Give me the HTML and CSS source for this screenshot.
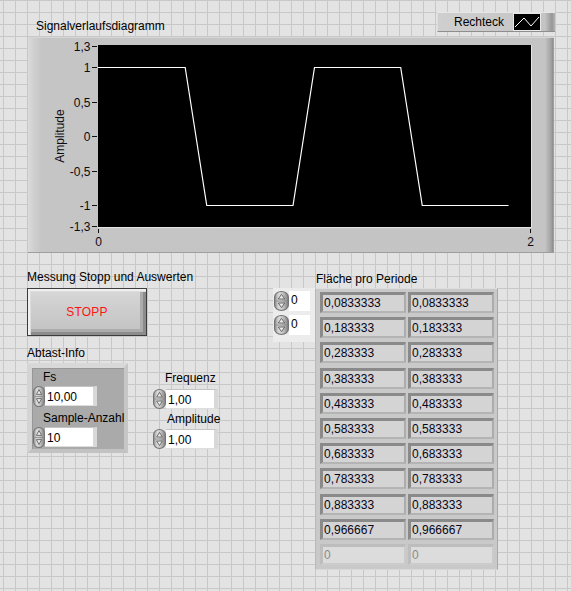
FILE: index.html
```html
<!DOCTYPE html>
<html lang="de">
<head>
<meta charset="utf-8">
<title>Signalverlauf</title>
<link rel="stylesheet" href="styles.css">
</head>
<body>
<svg class="defs" width="0" height="0" aria-hidden="true">
  <defs>
    <linearGradient id="spinG" x1="0" y1="0" x2="1" y2="0">
      <stop offset="0" stop-color="#8e8e8e"/>
      <stop offset="0.3" stop-color="#dcdcdc"/>
      <stop offset="0.6" stop-color="#c4c4c4"/>
      <stop offset="1" stop-color="#7e7e7e"/>
    </linearGradient>
    <symbol id="spin" viewBox="0 0 12 20">
      <rect x="0.5" y="0.5" width="11" height="19" rx="5.5" fill="url(#spinG)" stroke="#747474"/>
      <line x1="1.5" y1="10" x2="10.5" y2="10" stroke="#8a8a8a" stroke-width="0.8"/>
      <polygon points="6,3.4 3.4,8 8.6,8" fill="#e8e8e8" stroke="#5c5c5c" stroke-width="0.8"/>
      <polygon points="3.4,12 8.6,12 6,16.6" fill="#e8e8e8" stroke="#5c5c5c" stroke-width="0.8"/>
    </symbol>
  </defs>
</svg>

<div class="page">
  <div class="graph-head">
    <span class="label graph-label">Signalverlaufsdiagramm</span>
    <div class="legend">
      <span class="legend-text">Rechteck</span>
      <span class="legend-icon">
        <svg width="26" height="16" viewBox="0 0 26 16"><polyline points="1,13 10,4 17,12 25,3" fill="none" stroke="#fff" stroke-width="1"/></svg>
      </span>
    </div>
  </div>

  <div class="graph">
    <svg class="plot" width="526" height="216" viewBox="28 37 526 216">
      <rect x="98" y="45" width="433" height="182" fill="#000"/>
      <path d="M98 227.5H531.5V45" stroke="#e4e4e4" fill="none"/>
      <polyline points="98,67.5 185.2,67.5 206.75,205.5 293,205.5 314.5,67.5 400.7,67.5 422.25,205.5 508.5,205.5" fill="none" stroke="#fff" stroke-width="1.2"/>
      <path d="M92 46.5h5M92 67.5h5M92 102.5h5M92 136.5h5M92 171.5h5M92 205.5h5M92 226.5h5M98.5 229v4M530.5 229v4" stroke="#111" stroke-width="1"/>
      <g class="axis-text" text-anchor="end">
        <text x="90.5" y="50.8">1,3</text>
        <text x="90.5" y="71.8">1</text>
        <text x="90.5" y="106.8">0,5</text>
        <text x="90.5" y="140.8">0</text>
        <text x="90.5" y="175.8">-0,5</text>
        <text x="90.5" y="209.8">-1</text>
        <text x="90.5" y="230.8">-1,3</text>
      </g>
      <g class="axis-text" text-anchor="middle">
        <text x="98.7" y="246">0</text>
        <text x="530.5" y="246">2</text>
        <text x="63.5" y="136" transform="rotate(-90 63.5 136)">Amplitude</text>
      </g>
    </svg>
  </div>

  <div class="lower">
    <div class="left-col">
      <div class="label">Messung Stopp und Auswerten</div>
      <div class="stop-btn">STOPP</div>
      <div class="label abtast">Abtast-Info</div>
      <div class="cluster-row">
        <div class="cluster">
          <div class="label in-label">Fs</div>
          <div class="numeric">
            <svg class="spin" width="12" height="21" viewBox="0 0 12 20" preserveAspectRatio="none"><use href="#spin"/></svg>
            <span class="field">10,00</span>
          </div>
          <div class="label in-label second">Sample-Anzahl</div>
          <div class="numeric">
            <svg class="spin" width="12" height="21" viewBox="0 0 12 20" preserveAspectRatio="none"><use href="#spin"/></svg>
            <span class="field">10</span>
          </div>
        </div>
        <div class="num-col">
          <div class="label freq-label">Frequenz</div>
          <div class="numeric">
            <svg class="spin" width="13" height="20" viewBox="0 0 12 20" preserveAspectRatio="none"><use href="#spin"/></svg>
            <span class="field">1,00</span>
          </div>
          <div class="label amp-label">Amplitude</div>
          <div class="numeric amp-num">
            <svg class="spin" width="13" height="20" viewBox="0 0 12 20" preserveAspectRatio="none"><use href="#spin"/></svg>
            <span class="field">1,00</span>
          </div>
        </div>
      </div>
    </div>

    <div class="array-group">
      <div class="label array-label">Fläche pro Periode</div>
      <div class="array-row">
        <div class="index-panel">
          <div class="index">
            <svg class="spin" width="15" height="20" viewBox="0 0 12 20" preserveAspectRatio="none"><use href="#spin"/></svg>
            <span class="index-field">0</span>
          </div>
          <div class="index">
            <svg class="spin" width="15" height="20" viewBox="0 0 12 20" preserveAspectRatio="none"><use href="#spin"/></svg>
            <span class="index-field">0</span>
          </div>
        </div>
        <div class="array">
          <div class="cell">0,0833333</div><div class="cell">0,0833333</div>
          <div class="cell">0,183333</div><div class="cell">0,183333</div>
          <div class="cell">0,283333</div><div class="cell">0,283333</div>
          <div class="cell">0,383333</div><div class="cell">0,383333</div>
          <div class="cell">0,483333</div><div class="cell">0,483333</div>
          <div class="cell">0,583333</div><div class="cell">0,583333</div>
          <div class="cell">0,683333</div><div class="cell">0,683333</div>
          <div class="cell">0,783333</div><div class="cell">0,783333</div>
          <div class="cell">0,883333</div><div class="cell">0,883333</div>
          <div class="cell">0,966667</div><div class="cell">0,966667</div>
          <div class="cell disabled">0</div><div class="cell disabled">0</div>
        </div>
      </div>
    </div>
  </div>
</div>
</body>
</html>
```

FILE: styles.css
```css
html {
  background-color: #e3e3e3;
  background-image:
    linear-gradient(90deg, #c8c8c8 1px, transparent 1px),
    linear-gradient(#c8c8c8 1px, transparent 1px);
  background-size: 12px 12px;
  background-position: 3px 0;
  min-height: 100%;
}

body {
  margin: 0;
  font-family: "Liberation Sans", Arial, sans-serif;
  font-size: 12px;
  color: #000;
}

.defs {
  position: absolute;
  width: 0;
  height: 0;
  overflow: hidden;
}

.page {
  width: 571px;
  height: 591px;
  padding-top: 12px;
  box-sizing: border-box;
  overflow: hidden;
}

.label {
  line-height: 14px;
  height: 14px;
  white-space: nowrap;
}

/* ---------- graph ---------- */
.graph-head {
  display: flex;
  height: 25px;
}

.graph-label {
  margin-top: 7px;
  margin-left: 36px;
}

.legend {
  margin-left: auto;
  margin-right: 16px;
  width: 118px;
  height: 20px;
  box-sizing: border-box;
  display: flex;
  align-items: center;
  padding-left: 16px;
  border-top: 1px solid #e6e6e6;
  border-left: 1px solid #dedede;
  border-bottom: 1px solid #8e8e8e;
  background: linear-gradient(90deg, #cfcfcf 0, #c8c8c8 60%, #c4c4c4 calc(100% - 10px), #969696 calc(100% - 3px), #b4b4b4 100%);
}

.legend-icon {
  margin-left: 9px;
  width: 28px;
  height: 18px;
  box-sizing: border-box;
  border: 1px solid #e8e8e8;
  background: #000;
  display: flex;
}

.legend-icon svg {
  display: block;
}

.graph {
  margin-left: 28px;
  width: 526px;
  height: 216px;
  background: linear-gradient(90deg, #dadada 0, #cfcfcf 6px, #c5c5c5 14px, #c4c4c4 calc(100% - 9px), #a2a2a2 calc(100% - 3px), #8c8c8c calc(100% - 1px), #b0b0b0 100%);
  box-shadow: inset 0 1px 0 #d6d6d6, inset 0 -1px 0 #9e9e9e;
}

.plot {
  display: block;
}

.axis-text text {
  font-family: "Liberation Sans", Arial, sans-serif;
  font-size: 12px;
  fill: #0c0c14;
}

/* ---------- lower area ---------- */
.lower {
  display: flex;
  margin-top: 17px;
}

.left-col {
  margin-left: 27px;
  width: 246px;
  display: flex;
  flex-direction: column;
}

.stop-btn {
  margin-top: 4px;
  width: 120px;
  height: 48px;
  box-sizing: border-box;
  border: 1px solid #3c3c3c;
  background: linear-gradient(#d8d8d8 0, #cdcdcd 45%, #c2c2c2 100%);
  box-shadow:
    inset 2px 2px 0 #f0f0f0,
    inset 3px 3px 0 #dcdcdc,
    inset -3px -3px 0 #8c8c8c,
    inset -6px -6px 0 #acacac;
  display: flex;
  align-items: center;
  justify-content: center;
  color: #ff1414;
  font-size: 12px;
  letter-spacing: 0.2px;
}

.abtast {
  margin-top: 10px;
}

.cluster-row {
  display: flex;
  margin-top: 3px;
}

.cluster {
  width: 101px;
  height: 90px;
  box-sizing: border-box;
  border-style: solid;
  border-width: 5px 4px 4px 5px;
  border-color: #d8d8d8 #c6c6c6 #c2c2c2 #d4d4d4;
  background: #aaaaaa;
  box-shadow: inset 1px 1px 0 #979797;
  padding: 2px 0 0 1px;
  display: flex;
  flex-direction: column;
}

.in-label {
  margin-left: 10px;
}

.in-label.second {
  margin-top: 5px;
}

.cluster .numeric {
  margin-top: 2px;
}

.numeric {
  display: flex;
  height: 20px;
}

.spin {
  display: block;
  flex: none;
}

.field {
  width: 52px;
  height: 20px;
  box-sizing: border-box;
  background: #fff;
  border-top: 1px solid #c4c4c4;
  border-right: 4px solid #d8d8d8;
  border-bottom: 1px solid #dedede;
  padding-left: 2px;
  line-height: 20px;
  white-space: nowrap;
}

.num-col {
  margin-left: 25px;
  padding-top: 8px;
  display: flex;
  flex-direction: column;
}

.freq-label {
  margin-left: 12px;
}

.num-col .numeric {
  margin-top: 4px;
}

.amp-label {
  margin-left: 14px;
  margin-top: 3px;
}

.num-col .amp-num {
  margin-top: 3px;
}

/* ---------- array ---------- */
.array-group {
  display: flex;
  flex-direction: column;
  margin-top: 2px;
}

.array-label {
  margin-left: 43px;
}

.array-row {
  display: flex;
  align-items: flex-start;
  margin-top: 2px;
}

.index-panel {
  width: 42px;
  height: 54px;
  box-sizing: border-box;
  background: #ececec;
  padding: 3px 0 0 1px;
  display: flex;
  flex-direction: column;
  gap: 4px;
}

.index {
  display: flex;
  height: 20px;
}

.index-field {
  width: 21px;
  height: 20px;
  box-sizing: border-box;
  background: #fff;
  padding-left: 2px;
  line-height: 19px;
}

.array {
  width: 183px;
  height: 282px;
  box-sizing: border-box;
  border-style: solid;
  border-width: 1px;
  border-color: #dedede #a8a8a8 #d8d8d8 #b8b8b8;
  background: #c9c9c9;
  padding: 3px 3px 0 4px;
  display: grid;
  grid-template-columns: 86px 86px;
  grid-auto-rows: 21px;
  column-gap: 2px;
  row-gap: 4.2px;
}

.cell {
  box-sizing: border-box;
  height: 21px;
  border-style: solid;
  border-width: 3px 2px 2px 3px;
  border-color: #8a8a8a #acacac #b4b4b4 #8a8a8a;
  background: #d4d4d4;
  padding-left: 1px;
  line-height: 16px;
  white-space: nowrap;
  color: #06061a;
}

.cell.disabled {
  border-color: #bdbdbd #cacaca #cccccc #bdbdbd;
  background: #dcdcdc;
  color: #8a8a8a;
}
```
